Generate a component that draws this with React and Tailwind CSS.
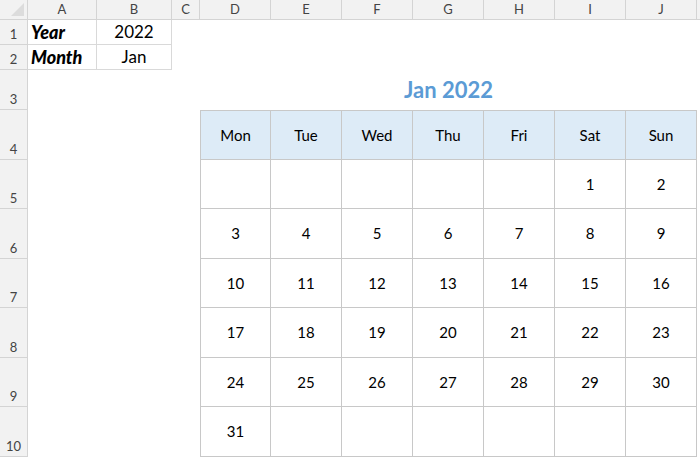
import React from "react";

const cols = ["A", "B", "C", "D", "E", "F", "G", "H", "I", "J"];
const colW = [69, 75, 28, 71, 71, 71, 71, 71, 71, 71];
const rowH = [25, 25, 40, 50, 49, 50, 49, 50, 49, 50];

const days = ["Mon", "Tue", "Wed", "Thu", "Fri", "Sat", "Sun"];
const weeks = [
  ["", "", "", "", "", "1", "2"],
  ["3", "4", "5", "6", "7", "8", "9"],
  ["10", "11", "12", "13", "14", "15", "16"],
  ["17", "18", "19", "20", "21", "22", "23"],
  ["24", "25", "26", "27", "28", "29", "30"],
  ["31", "", "", "", "", "", ""],
];

const font = { fontFamily: "Lato, 'Open Sans', sans-serif" };

export default function App() {
  const gridCols = `28px ${colW.map((w) => w + "px").join(" ")} 3px`;
  const gridRows = `20px ${rowH.map((h) => h + "px").join(" ")}`;

  const cells = [];
  cells.push(
    <div key="corner" className="relative bg-[#f2f2f2] border-r border-b border-[#d4d4d4]">
      <div className="absolute right-[3px] bottom-[3px] w-0 h-0 border-l-[13px] border-l-transparent border-b-[13px] border-b-[#dcdcdc]" />
    </div>
  );
  cols.forEach((c) => {
    cells.push(
      <div
        key={"h" + c}
        className="bg-[#f2f2f2] border-r border-b border-[#d4d4d4] flex items-center justify-center text-[13px] text-[#444]"
      >
        {c}
      </div>
    );
  });
  cells.push(<div key="hend" className="bg-[#f2f2f2] border-b border-[#d4d4d4]" />);

  for (let r = 1; r <= 10; r++) {
    cells.push(
      <div
        key={"r" + r}
        className="bg-[#f2f2f2] border-r border-b border-[#d4d4d4] flex items-end justify-center pb-[1px] text-[13px] text-[#444] leading-none"
      >
        <span className="mb-[2px]">{r}</span>
      </div>
    );
    if (r <= 2) {
      const a = r === 1 ? "Year" : "Month";
      const b = r === 1 ? "2022" : "Jan";
      cells.push(
        <div
          key={"a" + r}
          className="border-r border-b border-[#d9d9d9] flex items-center pl-[3px] text-[18px] font-black italic text-black"
        >
          {a}
        </div>
      );
      cells.push(
        <div
          key={"b" + r}
          className="border-r border-b border-[#d9d9d9] flex items-center justify-center text-[17px] text-black"
        >
          {b}
        </div>
      );
      cells.push(<div key={"c" + r} />);
      cells.push(<div key={"t" + r} className="col-span-7" />);
    } else if (r === 3) {
      cells.push(<div key="a3" />);
      cells.push(<div key="b3" />);
      cells.push(<div key="c3" />);
      cells.push(
        <div
          key="title"
          className="col-span-7 flex items-end justify-center pb-[9px] text-[22px] font-bold text-[#5b9bd5] leading-none"
        >
          Jan 2022
        </div>
      );
    } else {
      cells.push(<div key={"a" + r} />);
      cells.push(<div key={"b" + r} />);
      cells.push(<div key={"c" + r} />);
      const vals = r === 4 ? days : weeks[r - 5];
      vals.forEach((v, i) => {
        cells.push(
          <div
            key={r + "-" + i}
            className={`border-r border-b border-[#c8c8c8] ${i === 0 ? "border-l" : ""} ${
              r === 4 ? "border-t bg-[#ddebf7]" : "bg-white"
            } flex items-center justify-center text-[15px] text-black`}
          >
            {v}
          </div>
        );
      });
    }
    cells.push(<div key={"e" + r} />);
  }

  return (
    <div className="w-[700px] h-[459px] bg-white overflow-hidden" style={font}>
      <div className="grid" style={{ gridTemplateColumns: gridCols, gridTemplateRows: gridRows }}>
        {cells}
      </div>
    </div>
  );
}
